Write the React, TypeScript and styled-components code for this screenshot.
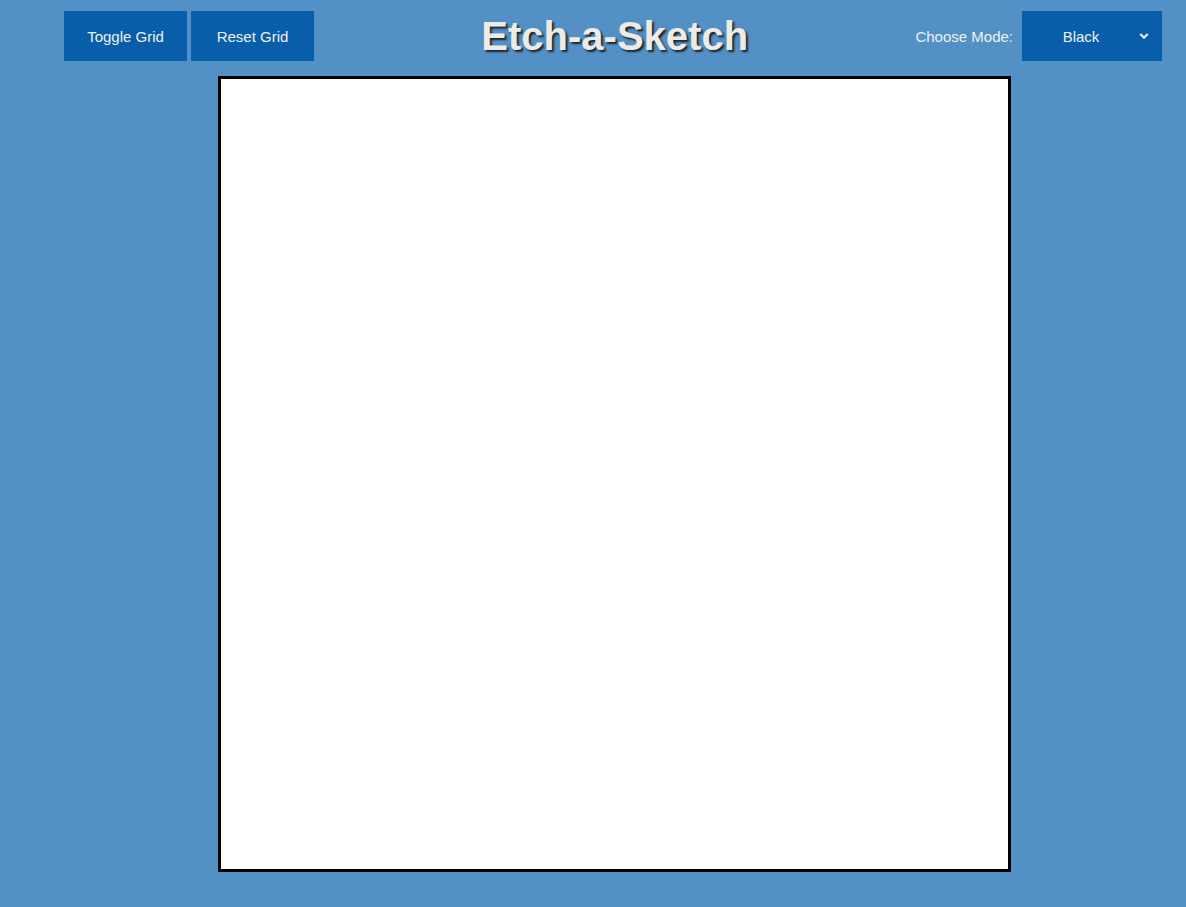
import React, { useState } from "react";
import styled, { createGlobalStyle } from "styled-components";

const Global = createGlobalStyle`
  html, body { margin: 0; padding: 0; }
  body {
    background: #5290c6;
    font-family: "Liberation Sans", Arial, sans-serif;
    min-height: 907px;
  }
`;

const Page = styled.div`
  display: flex;
  flex-direction: column;
`;

const Header = styled.header`
  display: flex;
  align-items: center;
  justify-content: space-between;
  padding: 11px 24px 0 64px;
  height: 50px;
`;

const Group = styled.div`
  display: flex;
  align-items: center;
  gap: 4px;
`;

const Button = styled.button`
  width: 123px;
  height: 50px;
  border: none;
  background: #085ea8;
  color: #f0f0f0;
  font-family: "Liberation Sans", Arial, sans-serif;
  font-size: 15px;
  cursor: pointer;
  padding: 0;
`;

const Title = styled.h1`
  margin: 0;
  font-size: 40px;
  font-weight: bold;
  color: #ecebe8;
  text-shadow: 2px 2px 2px #222;
  line-height: 50px;
`;

const Label = styled.label`
  color: #f0f0f0;
  font-size: 15px;
  margin-right: 5px;
`;

const SelectWrap = styled.div`
  position: relative;
  width: 140px;
  height: 50px;
`;

const Select = styled.select`
  appearance: none;
  -webkit-appearance: none;
  width: 100%;
  height: 100%;
  border: none;
  border-radius: 0;
  background: #085ea8;
  color: #f0f0f0;
  font-family: "Liberation Sans", Arial, sans-serif;
  font-size: 15px;
  text-align: center;
  text-align-last: center;
  padding: 0 22px 0 0;
  outline: none;
`;

const Chevron = styled.svg`
  position: absolute;
  right: 13px;
  top: 22px;
  pointer-events: none;
`;

const Main = styled.main`
  display: flex;
  justify-content: center;
  padding: 15px 22px 0 65px;
`;

const Board = styled.div`
  width: 787px;
  height: 790px;
  background: #fff;
  border: 3px solid #000;
`;

export default function App() {
  const [mode, setMode] = useState("Black");
  return (
    <Page>
      <Global />
      <Header>
        <Group>
          <Button>Toggle Grid</Button>
          <Button>Reset Grid</Button>
        </Group>
        <Title>Etch-a-Sketch</Title>
        <Group>
          <Label htmlFor="mode">Choose Mode:</Label>
          <SelectWrap>
            <Select id="mode" value={mode} onChange={(e) => setMode(e.target.value)}>
              <option>Black</option>
              <option>Rainbow</option>
              <option>Eraser</option>
            </Select>
            <Chevron width="10" height="6" viewBox="0 0 10 6">
              <path d="M1.3 1 L5 4.6 L8.7 1" fill="none" stroke="#f0f0f0" strokeWidth="2.2" />
            </Chevron>
          </SelectWrap>
        </Group>
      </Header>
      <Main>
        <Board />
      </Main>
    </Page>
  );
}
